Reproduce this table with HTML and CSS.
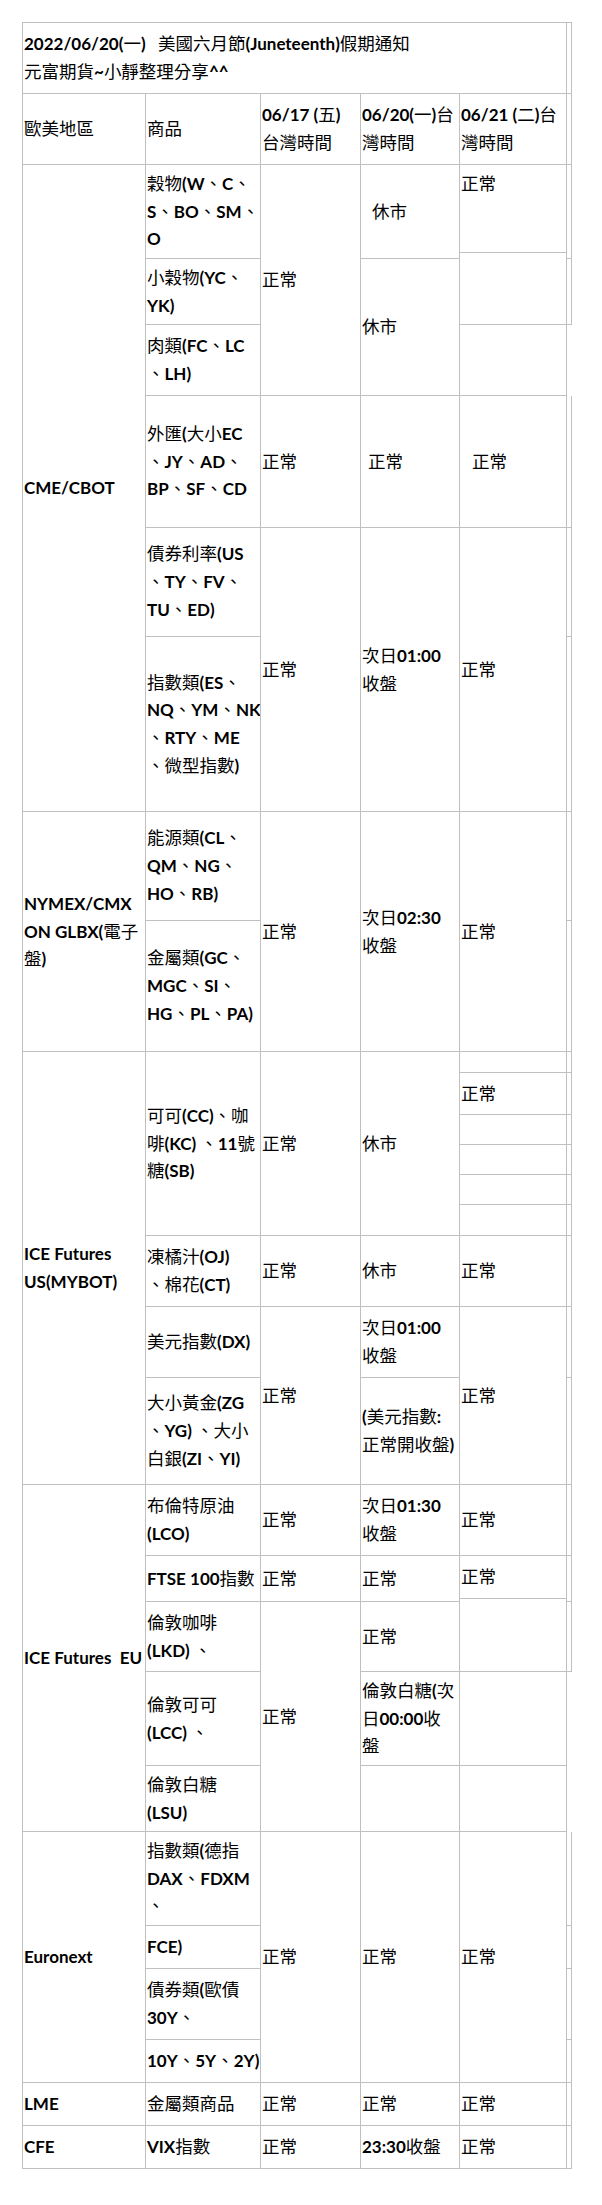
FILE: index.html
```html
<!DOCTYPE html>
<html lang="zh-Hant">
<head>
<meta charset="utf-8">
<title>2022/06/20 美國六月節假期通知</title>
<link rel="stylesheet" href="styles.css">
</head>
<body>
<table class="sheet">
  <colgroup>
    <col class="w1"><col class="w2"><col class="w3"><col class="w4"><col class="w5"><col class="w6">
  </colgroup>
  <tbody>
    <tr class="h71">
      <td colspan="5"><b>2022/06/20(</b>一<b>)&nbsp;&nbsp;&nbsp;</b>美國六月節<b>(Juneteenth)</b>假期通知<br>元富期貨<b>~</b>小靜整理分享<b>^^</b></td>
      <td></td>
    </tr>
    <tr class="h71">
      <td>歐美地區</td>
      <td>商品</td>
      <td><b>06/17 (</b>五<b>)</b><br>台灣時間</td>
      <td><b>06/20(</b>一<b>)</b>台<br>灣時間</td>
      <td><b>06/21 (</b>二<b>)</b>台<br>灣時間</td>
      <td></td>
    </tr>
    <tr class="h88">
      <td rowspan="7"><b>CME/CBOT</b></td>
      <td rowspan="2">穀物<b>(W</b>、<b>C</b>、<br><b>S</b>、<b>BO</b>、<b>SM</b>、<br><b>O</b></td>
      <td rowspan="4">正常</td>
      <td rowspan="2" class="ind10">休市</td>
      <td class="top">正常</td>
      <td rowspan="2"></td>
    </tr>
    <tr class="h6">
      <td rowspan="2"></td>
    </tr>
    <tr class="h66">
      <td>小穀物<b>(YC</b>、<br><b>YK)</b></td>
      <td rowspan="2">休市</td>
      <td></td>
    </tr>
    <tr class="h71">
      <td>肉類<b>(FC</b>、<b>LC</b><br>、<b>LH)</b></td>
      <td></td>
    </tr>
    <tr class="h132">
      <td>外匯<b>(</b>大小<b>EC</b><br>、<b>JY</b>、<b>AD</b>、<br><b>BP</b>、<b>SF</b>、<b>CD</b></td>
      <td>正常</td>
      <td class="ind6">正常</td>
      <td class="ind11">正常</td>
      <td></td>
    </tr>
    <tr class="h109">
      <td>債券利率<b>(US</b><br>、<b>TY</b>、<b>FV</b>、<br><b>TU</b>、<b>ED)</b></td>
      <td rowspan="2">正常</td>
      <td rowspan="2">次日<b>01:00</b><br>收盤</td>
      <td rowspan="2">正常</td>
      <td></td>
    </tr>
    <tr class="h175">
      <td>指數類<b>(ES</b>、<br><b>NQ</b>、<b>YM</b>、<b>NK</b><br>、<b>RTY</b>、<b>ME</b><br>、微型指數<b>)</b></td>
      <td></td>
    </tr>
    <tr class="h109">
      <td rowspan="2"><b>NYMEX/CMX</b><br><b>ON GLBX(</b>電子<br>盤<b>)</b></td>
      <td>能源類<b>(CL</b>、<br><b>QM</b>、<b>NG</b>、<br><b>HO</b>、<b>RB)</b></td>
      <td rowspan="2">正常</td>
      <td rowspan="2">次日<b>02:30</b><br>收盤</td>
      <td rowspan="2">正常</td>
      <td></td>
    </tr>
    <tr class="h131">
      <td>金屬類<b>(GC</b>、<br><b>MGC</b>、<b>SI</b>、<br><b>HG</b>、<b>PL</b>、<b>PA)</b></td>
      <td></td>
    </tr>
    <tr class="h21">
      <td rowspan="9"><b>ICE Futures</b><br><b>US(MYBOT)</b></td>
      <td rowspan="6">可可<b>(CC)</b>、咖<br>啡<b>(KC) </b>、<b>11</b>號<br>糖<b>(SB)</b></td>
      <td rowspan="6">正常</td>
      <td rowspan="6">休市</td>
      <td></td>
      <td></td>
    </tr>
    <tr class="h42">
      <td>正常</td>
      <td></td>
    </tr>
    <tr class="h30">
      <td></td>
      <td></td>
    </tr>
    <tr class="h30">
      <td></td>
      <td></td>
    </tr>
    <tr class="h30">
      <td></td>
      <td></td>
    </tr>
    <tr class="h31">
      <td></td>
      <td></td>
    </tr>
    <tr class="h71">
      <td>凍橘汁<b>(OJ)</b><br>、棉花<b>(CT)</b></td>
      <td>正常</td>
      <td>休市</td>
      <td>正常</td>
      <td></td>
    </tr>
    <tr class="h71">
      <td>美元指數<b>(DX)</b></td>
      <td rowspan="2">正常</td>
      <td>次日<b>01:00</b><br>收盤</td>
      <td rowspan="2">正常</td>
      <td></td>
    </tr>
    <tr class="h107">
      <td>大小黃金<b>(ZG</b><br>、<b>YG) </b>、大小<br>白銀<b>(ZI</b>、<b>YI)</b></td>
      <td><b>(</b>美元指數<b>:</b><br>正常開收盤<b>)</b></td>
      <td></td>
    </tr>
    <tr class="h71">
      <td rowspan="6"><b>ICE Futures&nbsp; EU</b></td>
      <td>布倫特原油<br><b>(LCO)</b></td>
      <td>正常</td>
      <td>次日<b>01:30</b><br>收盤</td>
      <td>正常</td>
      <td></td>
    </tr>
    <tr class="h43">
      <td rowspan="2"><b>FTSE 100</b>指數</td>
      <td rowspan="2">正常</td>
      <td rowspan="2">正常</td>
      <td>正常</td>
      <td rowspan="2"></td>
    </tr>
    <tr class="h3">
      <td rowspan="2"></td>
    </tr>
    <tr class="h70">
      <td>倫敦咖啡<br><b>(LKD) </b>、</td>
      <td rowspan="3">正常</td>
      <td>正常</td>
      <td></td>
    </tr>
    <tr class="h94">
      <td>倫敦可可<br><b>(LCC) </b>、</td>
      <td>倫敦白糖<b>(</b>次<br>日<b>00:00</b>收<br>盤</td>
      <td></td>
    </tr>
    <tr class="h66">
      <td>倫敦白糖<br><b>(LSU)</b></td>
      <td></td>
      <td></td>
    </tr>
    <tr class="h94">
      <td rowspan="4"><b>Euronext</b></td>
      <td>指數類<b>(</b>德指<br><b>DAX</b>、<b>FDXM</b><br>、</td>
      <td rowspan="4">正常</td>
      <td rowspan="4">正常</td>
      <td rowspan="4">正常</td>
      <td></td>
    </tr>
    <tr class="h43">
      <td><b>FCE)</b></td>
      <td></td>
    </tr>
    <tr class="h71">
      <td>債券類<b>(</b>歐債<br><b>30Y</b>、</td>
      <td></td>
    </tr>
    <tr class="h43">
      <td><b>10Y</b>、<b>5Y</b>、<b>2Y)</b></td>
      <td></td>
    </tr>
    <tr class="h43">
      <td><b>LME</b></td>
      <td>金屬類商品</td>
      <td>正常</td>
      <td>正常</td>
      <td>正常</td>
      <td></td>
    </tr>
    <tr class="h43">
      <td><b>CFE</b></td>
      <td><b>VIX</b>指數</td>
      <td>正常</td>
      <td><b>23:30</b>收盤</td>
      <td>正常</td>
      <td></td>
    </tr>
  </tbody>
</table>
</body>
</html>
```

FILE: styles.css
```css
html, body {
  margin: 0;
  padding: 0;
  background: #ffffff;
}

.sheet {
  border-collapse: separate;
  border-spacing: 0;
  table-layout: fixed;
  width: 550px;
  margin: 22px 0 0 22px;
  border-top: 1px solid #c0c0c0;
  border-left: 1px solid #c0c0c0;
  font-family: "Lato", "Noto Sans CJK TC", sans-serif;
  font-size: 17.5px;
  line-height: 27.7px;
  color: #000000;
}

.sheet td {
  border-right: 1px solid #c0c0c0;
  border-bottom: 1px solid #c0c0c0;
  padding: 0 0 0 1px;
  vertical-align: middle;
  white-space: nowrap;
  overflow: hidden;
}

.sheet b {
  font-weight: 700;
  font-size: 17px;
}

.w1 { width: 123px; }
.w2 { width: 115px; }
.w3 { width: 100px; }
.w4 { width: 99px; }
.w5 { width: 107px; }
.w6 { width: 5px; }

.sheet td.top {
  vertical-align: top;
  padding-top: 5px;
}

.sheet td.ind10 { padding-left: 11px; }
.sheet td.ind6 { padding-left: 7px; }
.sheet td.ind11 { padding-left: 12px; }

.h3 { height: 3px; }
.h6 { height: 6px; }
.h21 { height: 21px; }
.h30 { height: 30px; }
.h31 { height: 31px; }
.h42 { height: 42px; }
.h43 { height: 43px; }
.h66 { height: 66px; }
.h70 { height: 70px; }
.h71 { height: 71px; }
.h88 { height: 88px; }
.h94 { height: 94px; }
.h107 { height: 107px; }
.h109 { height: 109px; }
.h131 { height: 131px; }
.h132 { height: 132px; }
.h175 { height: 175px; }
```
